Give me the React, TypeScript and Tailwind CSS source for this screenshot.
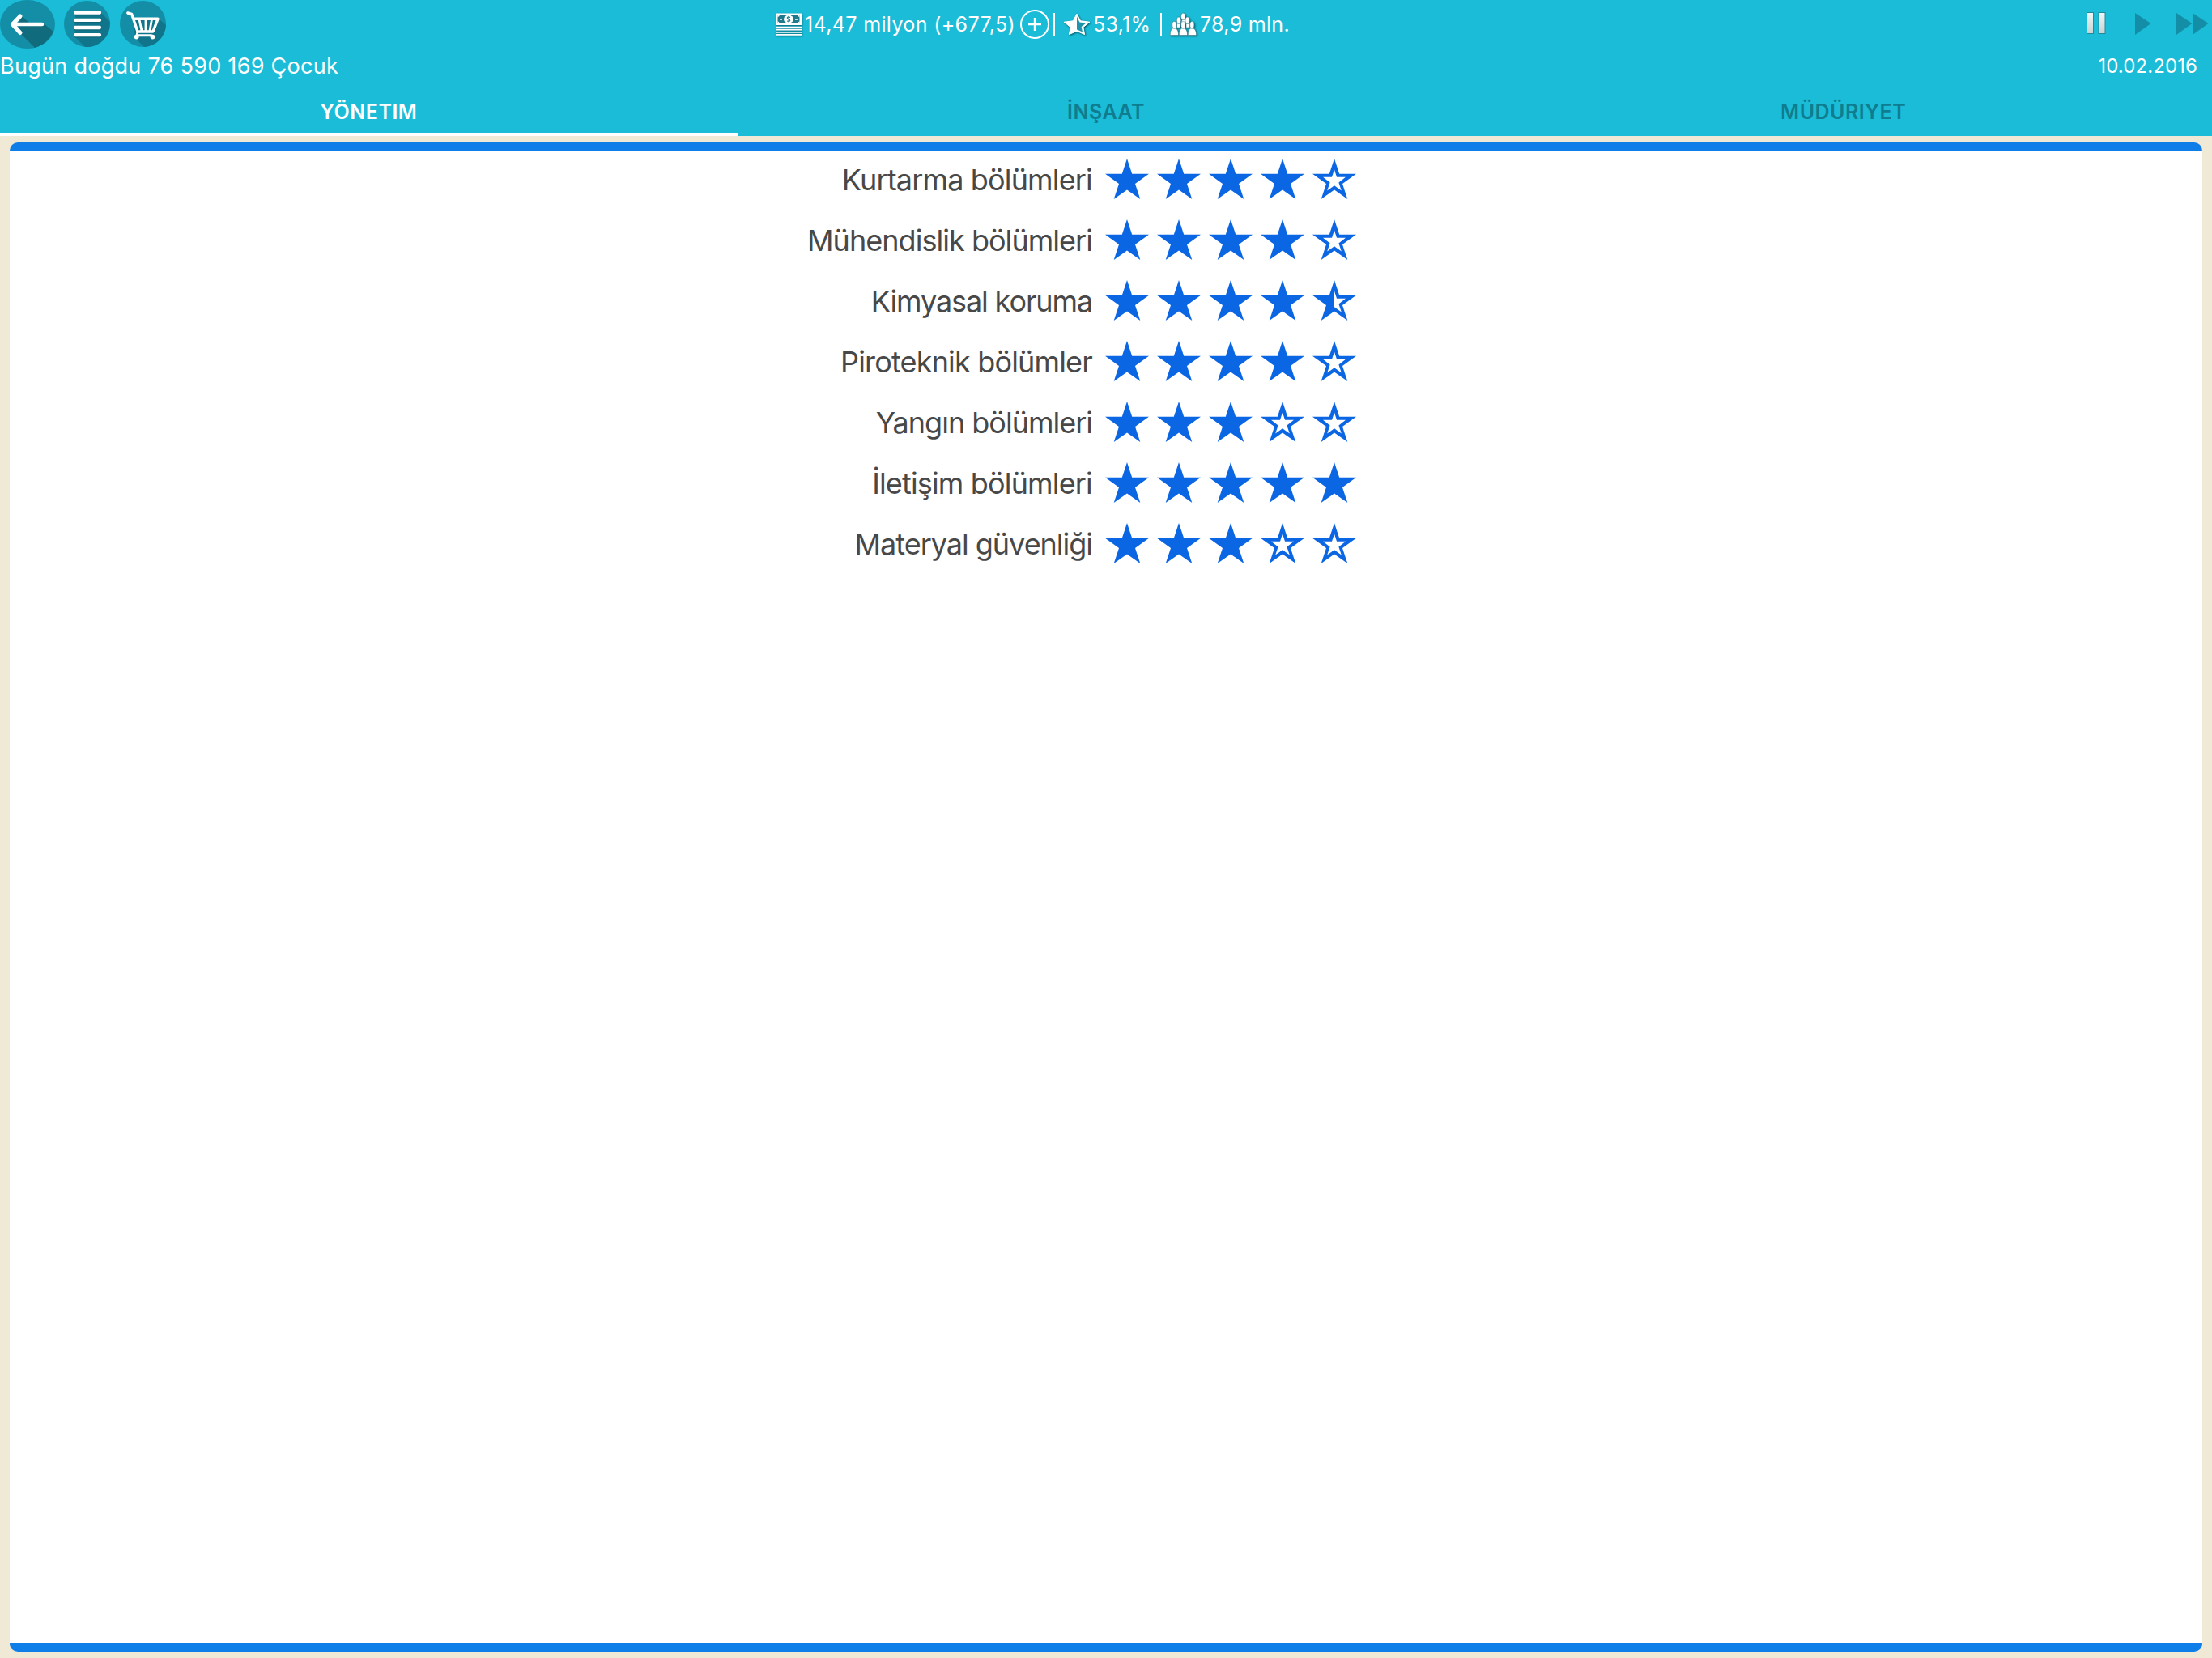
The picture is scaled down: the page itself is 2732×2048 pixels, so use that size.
import React from 'react';

type Fill = 'full' | 'half' | 'empty';

const STAR = '27,0 33.2,18.7 54,18.7 37,31 43.3,50 27,38.4 10.7,50 17,31 0,18.7 20.8,18.7';
const STAR_INNER = '27,13.5 30,22.8 41,22.8 32.4,29.6 35.8,39.5 27,33.2 18.2,39.5 21.6,29.6 13,22.8 24,22.8';
const STAR_INNER_HALF = '27,13.5 30,22.8 41,22.8 32.4,29.6 35.8,39.5 27,33.2';

const departments: { label: string; spacing: string; rating: number }[] = [
    { label: 'Kurtarma bölümleri', spacing: 'tracking-[-0.84px]', rating: 4 },
    { label: 'Mühendislik bölümleri', spacing: 'tracking-[-0.96px]', rating: 4 },
    { label: 'Kimyasal koruma', spacing: 'tracking-[-1.12px]', rating: 4.5 },
    { label: 'Piroteknik bölümler', spacing: 'tracking-[-0.83px]', rating: 4 },
    { label: 'Yangın bölümleri', spacing: 'tracking-[-1px]', rating: 3 },
    { label: 'İletişim bölümleri', spacing: 'tracking-[-0.84px]', rating: 5 },
    { label: 'Materyal güvenliği', spacing: 'tracking-[-1.02px]', rating: 3 },
];

const tabs = ['YÖNETIM', 'İNŞAAT', 'MÜDÜRIYET'];

const Star = ({ fill }: { fill: Fill }) => (
    <svg viewBox="0 0 54 50" className="w-[54px] h-[50px]">
        <polygon points={STAR} fill="#0b66e4" />
        {fill === 'empty' && <polygon points={STAR_INNER} fill="#fff" />}
        {fill === 'half' && <polygon points={STAR_INNER_HALF} fill="#fff" />}
    </svg>
);

const getFill = (rating: number, idx: number): Fill => {
    if (rating >= idx + 1) return 'full';
    return rating > idx ? 'half' : 'empty';
};

const BackIcon = () => (
    <svg viewBox="0 0 68 60" className="w-[68px] h-[60px]">
        <ellipse cx="34" cy="30" rx="34" ry="30" fill="#148ea6" />
        <path d="M27 20 L36 28 L54 29 L66 39 Q59 54 43 59 L26 42 L22 31 Z" fill="#106b7c" />
        <path d="M25 20 L15.5 30 L25 40.5" fill="none" stroke="#fff" strokeWidth="5" strokeLinecap="round" strokeLinejoin="round" />
        <path d="M16 30 H52" stroke="#fff" strokeWidth="4.5" strokeLinecap="round" />
    </svg>
);

const MenuIcon = () => (
    <svg viewBox="0 0 57 57" className="w-[57px] h-[57px]">
        <circle cx="28.5" cy="28.5" r="28.5" fill="#148ea6" />
        <path d="M45 14 L56.5 25.5 A28.5 28.5 0 0 1 26 57 L13 44 L14 17 Z" fill="#10748a" />
        <g stroke="#0f6679" strokeWidth="4.5" strokeLinecap="round">
            <path d="M14.5 16 H44 M14.5 25.2 H44 M14.5 34.2 H44 M14.5 43.2 H44" />
        </g>
        <g stroke="#fff" strokeWidth="4.3" strokeLinecap="round">
            <path d="M14 14.7 H44 M14 23.9 H44 M14 33 H44 M14 42.2 H44" />
        </g>
    </svg>
);

const CartIcon = () => (
    <svg viewBox="0 0 57 57" className="w-[57px] h-[57px]">
        <circle cx="28.5" cy="28.5" r="28.5" fill="#148ea6" />
        <path d="M48 22 L57 30 A28.5 28.5 0 0 1 30 57 L19 46 L17 23 Z" fill="#10748a" />
        <g fill="none" stroke="#fff" strokeLinecap="round" strokeLinejoin="round">
            <path d="M9.8 15 L14.7 16.5 L22 38 H41 L47 22.3 H18" strokeWidth="3.4" />
            <path d="M24 23 L27 37 M32 23 V37 M39.5 23 L37 37" strokeWidth="2.8" />
            <path d="M22 38 L21 42.8 H39" strokeWidth="3" />
        </g>
        <circle cx="20.7" cy="44.6" r="2.9" fill="#fff" />
        <circle cx="40.5" cy="44.6" r="2.9" fill="#fff" />
    </svg>
);

const MoneyIcon = () => (
    <svg viewBox="0 0 32 28" className="w-8 h-7 drop-shadow-[1px_1px_1px_rgba(0,60,75,0.7)]">
        <rect x="0" y="0.5" width="32" height="14.5" fill="#fff" />
        <rect x="2.5" y="2.5" width="27" height="10.5" fill="#20798b" />
        <ellipse cx="16" cy="7.7" rx="6" ry="5" fill="#fff" />
        <path d="M18 5.5 Q14 4 14.3 6.3 Q14.5 7.5 16 7.7 Q18 8.2 17.7 9.5 Q17 11 14 10 M16 3.8 V11.6" fill="none" stroke="#20798b" strokeWidth="1.1" />
        <path d="M2.5 2.5 h3 l-3 3 Z M29.5 2.5 h-3 l3 3 Z M2.5 13 h3 l-3 -3 Z M29.5 13 h-3 l3 -3 Z M5 7 h3 v1.8 h-3 Z M24 7 h3 v1.8 h-3 Z" fill="#fff" />
        <path d="M0 17.5 H32 M0 20.7 H32 M0 23.8 H32 M0 26.8 H32" stroke="#fff" strokeWidth="1.7" />
    </svg>
);

const RatingIcon = () => (
    <svg viewBox="0 0 34 28" className="w-[34px] h-7 drop-shadow-[1px_1px_1px_rgba(0,60,75,0.8)]">
        <polygon
            points="17,1.2 21.6,9.8 32.8,11.2 24.8,17.6 26.6,26.6 17,22.4 7.4,26.6 9.2,17.6 1.2,11.2 12.4,9.8"
            fill="#fff"
            stroke="#fff"
            strokeWidth="1"
            strokeLinejoin="round"
        />
        <polygon points="17,4.4 20.4,11.4 28.6,12.4 22.6,17 24,23.4 17,20.4" fill="#1f93aa" />
    </svg>
);

const Head = ({ x, y }: { x: number; y: number }) => <ellipse cx={x} cy={y} rx="2.6" ry="4.2" />;

const PeopleIcon = () => (
    <svg viewBox="0 0 33 28" className="w-[33px] h-7 drop-shadow-[1px_1px_1px_rgba(0,60,75,0.8)]">
        <g fill="#fff" stroke="#2a7585" strokeWidth="0.5">
            <path d="M13.5 14 L15 8 H18 L19.5 14 Z" />
            <path d="M8.5 18 V13 H13 V18 Z M20 18 V13 H24.5 V18 Z" />
            <Head x={16.3} y={4.4} />
            <Head x={11} y={9.3} />
            <Head x={21.6} y={9.3} />
            <path d="M0.2 27.5 Q0.2 20.5 3.6 19 H7 Q10.6 20.5 10.6 27.5 Z" />
            <path d="M11.2 27.5 Q11.2 20.5 14.6 19 H18 Q21.6 20.5 21.6 27.5 Z" />
            <path d="M22.2 27.5 Q22.2 20.5 25.6 19 H29 Q32.6 20.5 32.6 27.5 Z" />
            <Head x={5.4} y={14.8} />
            <Head x={16.3} y={14.8} />
            <Head x={27.3} y={14.8} />
        </g>
    </svg>
);

const PlusIcon = () => (
    <svg viewBox="0 0 36 36" className="w-9 h-9" fill="none" stroke="#fff">
        <circle cx="18" cy="18" r="17" strokeWidth="2" />
        <path d="M10 18 H26 M18 10 V26" strokeWidth="2.4" />
    </svg>
);

const PauseIcon = () => (
    <svg viewBox="0 0 24 28" className="w-6 h-7">
        <defs>
            <linearGradient id="pause" x1="0" y1="0" x2="0" y2="1">
                <stop offset="0" stopColor="#eef8f8" />
                <stop offset="1" stopColor="#c8d2d2" />
            </linearGradient>
        </defs>
        <g fill="url(#pause)" stroke="#23899c" strokeWidth="1">
            <rect x="0.5" y="0.5" width="8" height="26" />
            <rect x="15" y="0.5" width="8" height="26" />
        </g>
    </svg>
);

const App = () => {
    return (
        <div className="w-[2732px] h-[2048px] flex flex-col bg-[#f0e9d6] overflow-hidden font-['Inter','Liberation_Sans',sans-serif]">
            <header className="h-[168px] shrink-0 flex flex-col bg-[#1abcd7] text-white">
                <div className="h-[60px] flex">
                    <div className="w-[958px] flex">
                        <BackIcon />
                        <div className="ml-[11px] mt-px"><MenuIcon /></div>
                        <div className="ml-3 mt-px"><CartIcon /></div>
                    </div>
                    <div className="flex-1 flex items-center text-[25px] whitespace-nowrap">
                        <MoneyIcon />
                        <span className="w-[270px] pl-1 pt-px tracking-[0.36px]">14,47 milyon (+677,5)</span>
                        <PlusIcon />
                        <div className="ml-[5px] w-0.5 h-7 bg-white"></div>
                        <div className="ml-[10px]"><RatingIcon /></div>
                        <span className="w-[86px] pl-[3px] pt-px tracking-[0.3px]">53,1%</span>
                        <div className="w-0.5 h-7 bg-white"></div>
                        <div className="ml-[10px]"><PeopleIcon /></div>
                        <span className="pl-1 pt-px tracking-[0.3px]">78,9 mln.</span>
                    </div>
                    <div className="w-[155px] flex pt-[15px]">
                        <PauseIcon />
                        <svg viewBox="0 0 20 28" className="ml-9 w-5 h-7">
                            <polygon points="0,1 19.5,14 0,28" fill="#148ea6" />
                        </svg>
                        <svg viewBox="0 0 40 28" className="ml-[31px] w-10 h-7">
                            <polygon points="0,1 19.5,14 0,28" fill="#148ea6" />
                            <polygon points="20,1 39.5,14 20,28" fill="#148ea6" />
                        </svg>
                    </div>
                </div>
                <div className="h-11 flex items-center justify-between pr-[18px]">
                    <span className="text-[27px] tracking-[0.28px]">Bugün doğdu 76 590 169 Çocuk</span>
                    <span className="text-[24px] tracking-[0.1px]">10.02.2016</span>
                </div>
                <nav className="flex-1 grid grid-cols-3">
                    {tabs.map((tab, idx) => (
                        <div
                            key={tab}
                            className={`flex items-center justify-center pt-[10px] text-[25px] font-semibold tracking-[0.5px] border-b-4 ${idx === 0 ? 'border-white text-white' : 'border-transparent text-[#107c8f]'}`}
                        >
                            {tab}
                        </div>
                    ))}
                </nav>
            </header>

            <main className="flex-1 mx-3 my-2 rounded-[10px] overflow-hidden bg-[#0f7ee9] flex flex-col py-[10px]">
                <div className="flex-1 bg-white">
                    {departments.map(({ label, spacing, rating }) => (
                        <div key={label} className="h-[75px] flex items-center">
                            <span className={`w-[1337px] pb-[3px] text-right text-[36px] text-[#484848] ${spacing}`}>{label}</span>
                            <div className="ml-4 pb-[6px] flex gap-[10px]">
                                {[0, 1, 2, 3, 4].map(idx => (
                                    <Star key={idx} fill={getFill(rating, idx)} />
                                ))}
                            </div>
                        </div>
                    ))}
                </div>
            </main>
        </div>
    );
};

export default App;
